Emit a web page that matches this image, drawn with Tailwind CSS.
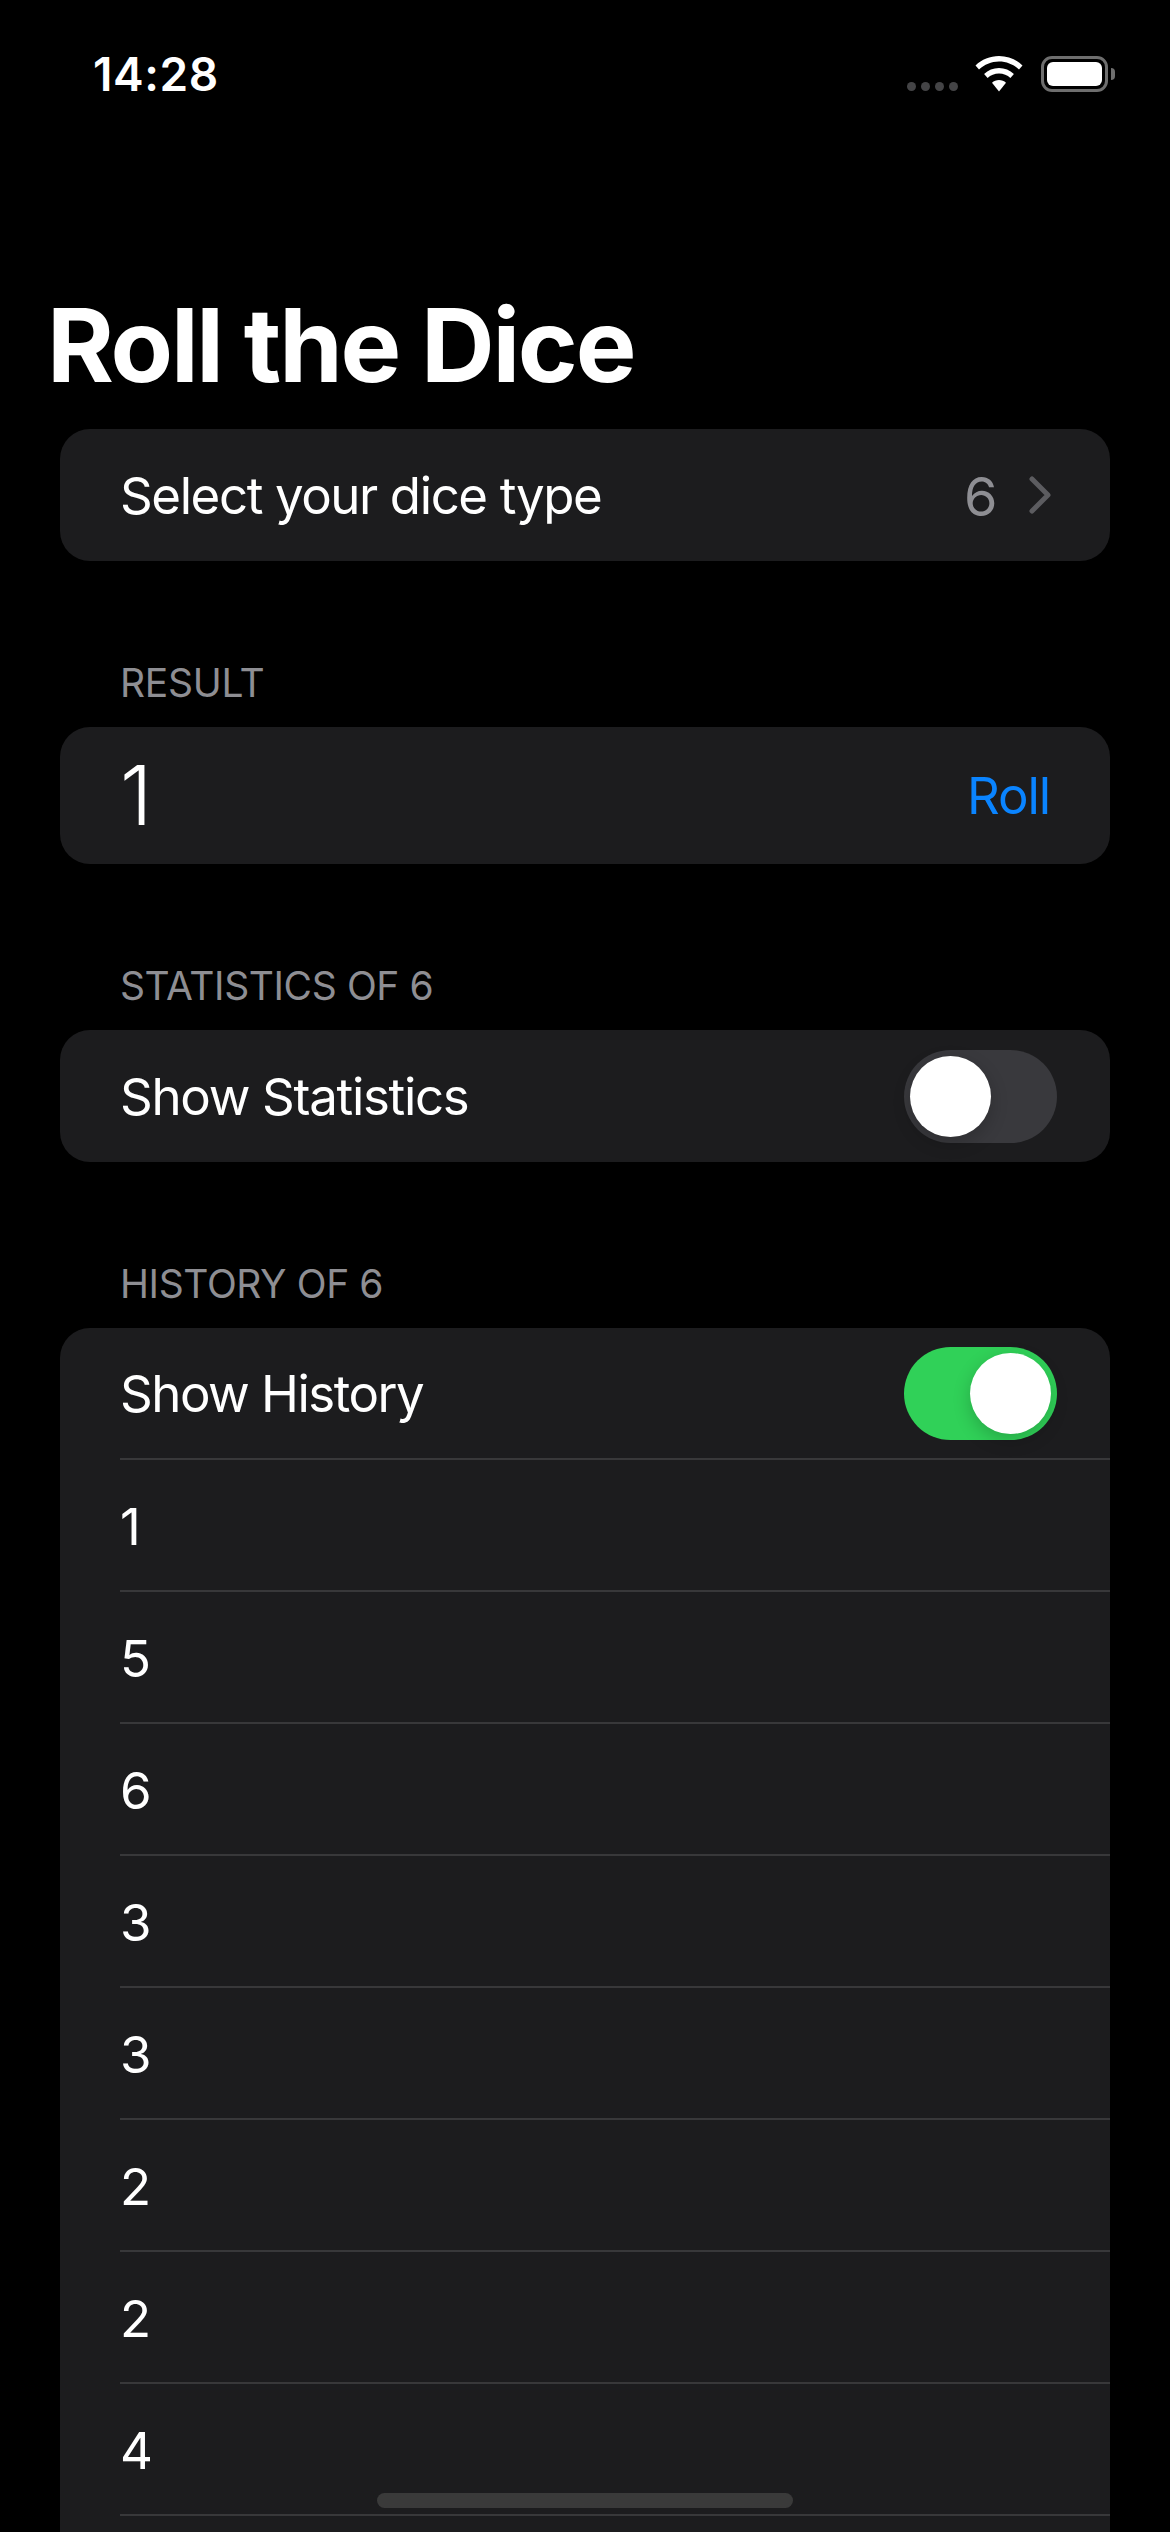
<!DOCTYPE html>
<html lang="en">
<head>
    <meta charset="UTF-8">
    <meta name="viewport" content="width=device-width, initial-scale=1.0">
    <title>Roll the Dice</title>
    <script src="https://cdn.jsdelivr.net/npm/@tailwindcss/browser@4"></script>
</head>
<body class="bg-black text-white font-['Inter',sans-serif]">
    <div class="relative h-[2532px] overflow-hidden">
        <!-- Status bar -->
        <div class="flex h-[148px] items-start justify-between pl-[93px] pr-[55px] pt-[46px]">
            <span class="text-[46px] leading-[56px] font-semibold tracking-[0.6px]">14:28</span>
            <div class="flex items-start pt-[10px]">
                <div class="mt-[26px] mr-[17px] flex gap-[5px]">
                    <span class="size-[9px] rounded-full bg-[#444446]"></span>
                    <span class="size-[9px] rounded-full bg-[#444446]"></span>
                    <span class="size-[9px] rounded-full bg-[#444446]"></span>
                    <span class="size-[9px] rounded-full bg-[#444446]"></span>
                </div>
                <svg class="mr-[18px]" width="48" height="36" viewBox="0 0 48 36" fill="#fff">
                    <path d="M24 0C15 0 6.800 3.500 0.500 9.500L4 13.500C9.300 8.500 16.300 5.500 24 5.500C31.700 5.500 38.700 8.500 44 13.500L47.500 9.500C41.200 3.500 33 0 24 0Z"/>
                    <path d="M24 12C18.300 12 13.100 14.200 9.100 18L12.600 22C15.600 19.200 19.600 17.500 24 17.500C28.400 17.500 32.400 19.200 35.400 22L38.900 18C34.900 14.200 29.700 12 24 12Z"/>
                    <path d="M24 24C21.300 24 18.900 25 17 26.700L24 35.500L31 26.700C29.100 25 26.700 24 24 24Z"/>
                </svg>
                <div class="flex items-center">
                    <div class="h-[36px] w-[67px] rounded-[11px] border-[3px] border-[#6e6e6e] p-[3px]">
                        <div class="size-full rounded-[6px] bg-white"></div>
                    </div>
                    <div class="ml-[3px] h-[12px] w-[4px] rounded-r-full bg-[#6e6e6e]"></div>
                </div>
            </div>
        </div>

        <!-- Title -->
        <h1 class="h-[281px] pl-[47px] pt-[136px] text-[102px] leading-[122px] font-bold tracking-[-2.2px]">Roll the Dice</h1>

        <div class="px-[60px]">
            <!-- Dice type -->
            <div class="flex h-[132px] items-center justify-between rounded-[30px] bg-[#1c1c1e] pl-[60px] pr-[59px] text-[51px] tracking-[-1.4px]">
                <span class="pt-[3px]">Select your dice type</span>
                <div class="flex items-center gap-[33px]">
                    <span class="pt-[3px] text-[54px] text-[#8e8e93]">6</span>
                    <svg width="22" height="38" viewBox="0 0 22 38" fill="none" stroke="#5c5c60" stroke-width="5" stroke-linecap="round" stroke-linejoin="round">
                        <path d="M3 3L19 19L3 35"/>
                    </svg>
                </div>
            </div>

            <!-- Result -->
            <p class="mt-[96px] h-[70px] pl-[60px] pt-[3px] text-[39px] leading-[46px] tracking-[-0.3px] text-[#8e8e93]">RESULT</p>
            <div class="flex h-[137px] items-center justify-between rounded-[30px] bg-[#1c1c1e] pl-[60px] pr-[60px]">
                <span class="text-[82px] font-light leading-none">1</span>
                <span class="pt-[2px] text-[51px] tracking-[-1.1px] text-[#0a84ff]">Roll</span>
            </div>

            <!-- Statistics -->
            <p class="mt-[96px] h-[70px] pl-[60px] pt-[3px] text-[39px] leading-[46px] tracking-[-0.4px] text-[#8e8e93]">STATISTICS OF 6</p>
            <div class="flex h-[132px] items-center justify-between rounded-[30px] bg-[#1c1c1e] pl-[60px] pr-[53px] text-[51px] tracking-[-1.3px]">
                <span class="pt-[3px]">Show Statistics</span>
                <div class="flex h-[93px] w-[153px] items-center justify-start rounded-full bg-[#39393d] p-[6px]">
                    <span class="size-[81px] rounded-full bg-white shadow-[0_6px_18px_rgba(0,0,0,0.2)]"></span>
                </div>
            </div>

            <!-- History -->
            <p class="mt-[96px] h-[70px] pl-[60px] pt-[3px] text-[39px] leading-[46px] tracking-[-0.4px] text-[#8e8e93]">HISTORY OF 6</p>
            <div class="rounded-t-[30px] bg-[#1c1c1e] pl-[60px] text-[51px] tracking-[-1.5px]">
                <div class="flex h-[132px] items-center justify-between border-b-2 border-[#38383a] pr-[53px]">
                    <span class="pt-[3px]">Show History</span>
                    <div class="flex h-[93px] w-[153px] items-center justify-end rounded-full bg-[#30d158] p-[6px]">
                        <span class="size-[81px] rounded-full bg-white shadow-[0_6px_18px_rgba(0,0,0,0.2)]"></span>
                    </div>
                </div>
                <div class="flex h-[132px] items-center border-b-2 border-[#38383a] pt-[4px]">1</div>
                <div class="flex h-[132px] items-center border-b-2 border-[#38383a] pt-[4px]">5</div>
                <div class="flex h-[132px] items-center border-b-2 border-[#38383a] pt-[4px]">6</div>
                <div class="flex h-[132px] items-center border-b-2 border-[#38383a] pt-[4px]">3</div>
                <div class="flex h-[132px] items-center border-b-2 border-[#38383a] pt-[4px]">3</div>
                <div class="flex h-[132px] items-center border-b-2 border-[#38383a] pt-[4px]">2</div>
                <div class="flex h-[132px] items-center border-b-2 border-[#38383a] pt-[4px]">2</div>
                <div class="flex h-[132px] items-center border-b-2 border-[#38383a] pt-[4px]">4</div>
                <div class="h-[132px]"></div>
            </div>
        </div>

        <!-- Home indicator -->
        <div class="absolute left-[377px] top-[2493px] h-[15px] w-[416px] rounded-[8px] bg-[#3a3a3a]"></div>
    </div>
</body>
</html>
